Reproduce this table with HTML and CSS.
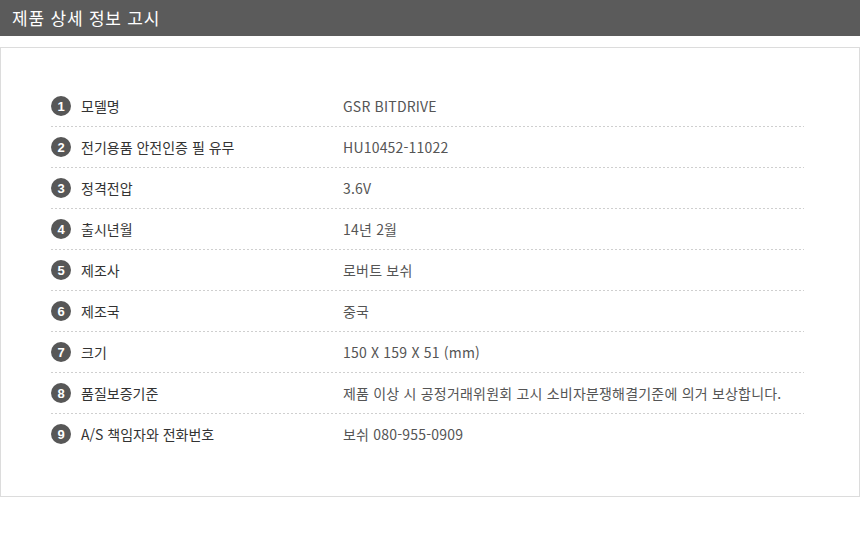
FILE: index.html
```html
<!DOCTYPE html>
<html lang="ko">
<head>
<meta charset="utf-8">
<link rel="stylesheet" href="styles.css">
</head>
<body>
<div class="header">제품 상세 정보 고시</div>
<div class="box">
  <ul class="list">
    <li class="row"><span class="num">1</span><span class="label">모델명</span><span class="value">GSR BITDRIVE</span></li>
    <li class="row"><span class="num">2</span><span class="label">전기용품 안전인증 필 유무</span><span class="value">HU10452-11022</span></li>
    <li class="row"><span class="num">3</span><span class="label">정격전압</span><span class="value">3.6V</span></li>
    <li class="row"><span class="num">4</span><span class="label">출시년월</span><span class="value">14년 2월</span></li>
    <li class="row"><span class="num">5</span><span class="label">제조사</span><span class="value">로버트 보쉬</span></li>
    <li class="row"><span class="num">6</span><span class="label">제조국</span><span class="value">중국</span></li>
    <li class="row"><span class="num">7</span><span class="label">크기</span><span class="value">150 X 159 X 51 (mm)</span></li>
    <li class="row"><span class="num">8</span><span class="label">품질보증기준</span><span class="value">제품 이상 시 공정거래위원회 고시 소비자분쟁해결기준에 의거 보상합니다.</span></li>
    <li class="row last"><span class="num">9</span><span class="label">A/S 책임자와 전화번호</span><span class="value">보쉬 080-955-0909</span></li>
  </ul>
</div>
</body>
</html>
```
FILE: styles.css
```css
html, body {
  margin: 0;
  padding: 0;
  background: #fff;
  font-family: "Noto Sans CJK KR", "Noto Sans", sans-serif;
}
.header {
  height: 36px;
  background: #5b5b5b;
  color: #fff;
  font-size: 17px;
  letter-spacing: 0.8px;
  line-height: 36px;
  padding-left: 12px;
}
.box {
  margin-top: 11px;
  border: 1px solid #dcdcdc;
  height: 450px;
  box-sizing: border-box;
  padding: 38px 55px 0 50px;
}
.list {
  list-style: none;
  margin: 0;
  padding: 0;
}
.row {
  display: flex;
  align-items: center;
  height: 40px;
  font-size: 14px;
  background-image: linear-gradient(to right, #cfcfcf 50%, transparent 50%);
  background-size: 4px 1px;
  background-repeat: repeat-x;
  background-position: left bottom;
  padding-bottom: 1px;
}
.row.last {
  background: none;
}
.num {
  width: 20px;
  height: 20px;
  border-radius: 50%;
  background: #575757;
  color: #fff;
  font-family: "Liberation Sans", Arial, sans-serif;
  font-weight: bold;
  font-size: 13px;
  display: flex;
  align-items: center;
  justify-content: center;
  flex: none;
}
.label {
  margin-left: 10px;
  width: 262px;
  color: #333;
  flex: none;
}
.value {
  color: #555;
  letter-spacing: 0.2px;
}
```
